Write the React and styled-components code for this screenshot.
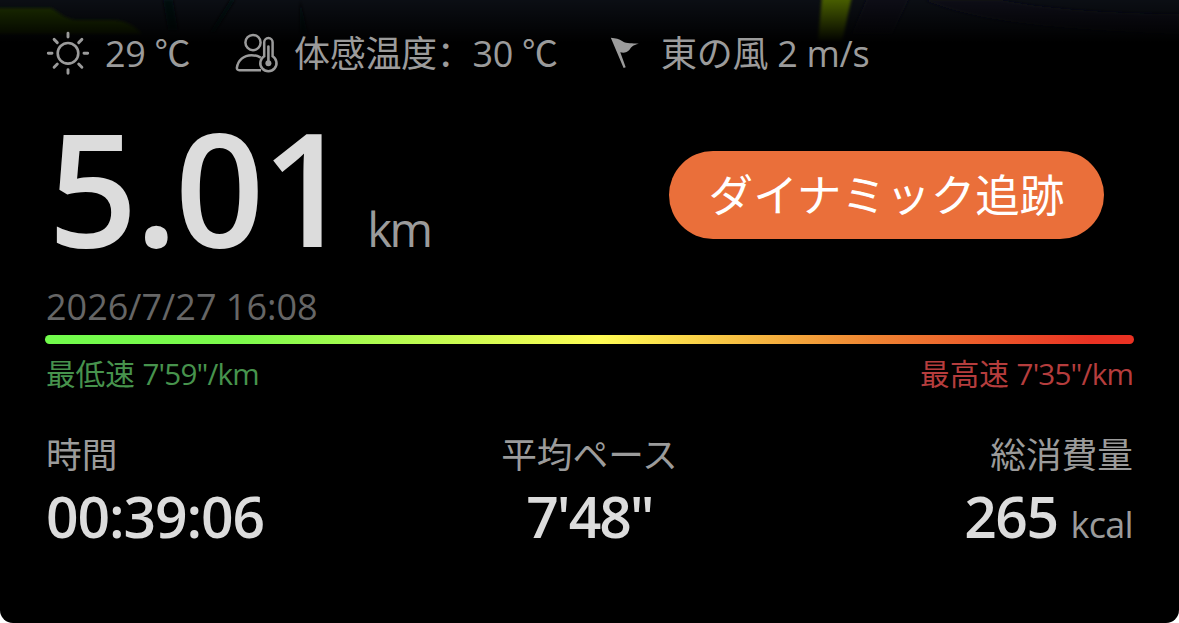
import styled, { createGlobalStyle } from 'styled-components';

const GlobalStyle = createGlobalStyle`
  * {
    box-sizing: border-box;
  }

  body {
    margin: 0;
    background: #fff;
    font-family: 'Open Sans', 'Noto Sans CJK JP', sans-serif;
  }
`;

const Card = styled.main`
  position: relative;
  width: 1179px;
  height: 623px;
  padding: 26px 46px 0 46px;
  background: #000;
  border-radius: 0 0 13px 13px;
  overflow: hidden;
  white-space: nowrap;
`;

const Backdrop = styled.svg`
  position: absolute;
  top: 0;
  left: 0;
`;

const Weather = styled.div`
  position: relative;
  display: flex;
  align-items: center;
  height: 54px;
  color: #9b9b9b;
`;

const WeatherItem = styled.div`
  display: flex;
  align-items: center;
  gap: ${(props) => props.$gap}px;
  width: ${(props) => props.$width}px;

  svg {
    flex: none;
  }
`;

const WeatherText = styled.span`
  padding-top: 1px;
  font-family: 'Open Sans', 'Noto Sans CJK SC', sans-serif;
  font-size: 36px;
  line-height: 54px;
  letter-spacing: -0.3px;
`;

const Hero = styled.section`
  display: flex;
  justify-content: space-between;
  align-items: flex-start;
  height: 203px;
  padding: 0 29px 0 2px;
`;

const Distance = styled.div`
  display: flex;
  align-items: baseline;
  gap: 19px;
  margin-top: 24px;
  line-height: 164px;
  color: #dcdcdc;
`;

const DistanceValue = styled.span`
  font-size: 157px;
  font-weight: 650;
  letter-spacing: -3px;
`;

const DistanceUnit = styled.span`
  font-size: 47px;
  letter-spacing: -2.5px;
  color: #9b9b9b;
`;

const TrackButton = styled.button`
  width: 435px;
  height: 88px;
  margin-top: 71px;
  padding: 0 0 5px;
  border: 0;
  border-radius: 44px;
  background: #ea6f3a;
  color: #fff;
  font-family: 'Noto Sans CJK JP', sans-serif;
  font-size: 44.6px;
  line-height: 80px;
`;

const DateLine = styled.time`
  display: block;
  height: 52px;
  font-size: 36px;
  line-height: 48px;
  color: #666;
`;

const PaceBar = styled.div`
  height: 9px;
  margin: 0 -1px;
  border-radius: 5px;
  background: linear-gradient(
    90deg,
    #71fb4c 0%,
    #7dfb4c 18%,
    #fffc54 51%,
    #ef8432 76%,
    #ea3223 96%
  );
`;

const PaceRange = styled.div`
  display: flex;
  justify-content: space-between;
  height: 88px;
`;

const Pace = styled.span`
  font-size: 29.6px;
  line-height: 60px;
  color: ${(props) => props.$color};
`;

const PaceValue = styled.span`
  letter-spacing: -0.8px;
`;

const Stats = styled.div`
  display: grid;
  grid-template-columns: 1fr 1fr 1fr;
`;

const Stat = styled.div`
  text-align: ${(props) => props.$align};
`;

const StatLabel = styled.div`
  font-size: 35.7px;
  line-height: 44px;
  color: #9b9b9b;
`;

const StatValue = styled.div`
  font-size: 57px;
  font-weight: 650;
  line-height: 80px;
  letter-spacing: ${(props) => props.$spacing}px;
  color: #dcdcdc;
`;

const StatUnit = styled.span`
  margin-left: 13px;
  font-size: 36px;
  font-weight: 400;
  letter-spacing: -0.7px;
  color: #9b9b9b;
`;

const SunIcon = () => (
  <svg width="44" height="44" viewBox="0 0 44 44" fill="none">
    <circle cx="22" cy="22.3" r="10.3" stroke="currentColor" strokeWidth="2.6" />
    <path
      d="M22 2.3v3.7M22 38.6v3.7M2.3 22.3H6M38 22.3h3.7M8.1 8.4l3.2 3.2M32.7 33l3.2 3.2M8.1 36.2l3.2-3.2M32.7 11.6l3.2-3.2"
      stroke="currentColor"
      strokeWidth="2.9"
      strokeLinecap="round"
    />
  </svg>
);

const FeelsLikeIcon = () => (
  <svg width="44" height="42" viewBox="0 0 44 42" fill="none">
    <g stroke="currentColor" strokeWidth="2.5">
      <circle cx="18" cy="10.6" r="7.6" />
      <path
        d="M26 38.2H4.2c-1.5 0-2.5-1-2.3-2.5C3 28.3 8.7 23.2 16.5 23.2c3.6 0 6.6.9 9.3 2.4"
        strokeLinejoin="round"
      />
      <path d="M29.2 24.2V10.3a4.2 4.2 0 0 1 8.4 0v13.9a8.1 8.1 0 1 1-8.4 0z" />
    </g>
    <path
      d="M33.4 14.5v16"
      stroke="currentColor"
      strokeWidth="2.6"
      strokeLinecap="round"
    />
    <circle cx="33.4" cy="31.3" r="3" fill="currentColor" />
  </svg>
);

const FlagIcon = () => (
  <svg width="30" height="32" viewBox="0 0 30 32">
    <path
      d="M.8.8C6 1.2 9 2 12.5 4.2c4.5 3 9.5 1.5 16.3 2.6-6.3 1.6-7.3 3.2-9.3 5.9-2.4 3-6 3.6-9.2 2.6L15.7 30.3l-2.1.7z"
      fill="currentColor"
    />
  </svg>
);

// Faded strip of the map that shows above the weather row
const MapEdge = () => (
  <Backdrop width="1179" height="50" viewBox="0 0 1179 50">
    <defs>
      <linearGradient id="fade" x1="0" y1="0" x2="0" y2="1">
        <stop offset="0" stopColor="#000" stopOpacity="0" />
        <stop offset="0.85" stopColor="#000" />
      </linearGradient>
      <filter id="soft">
        <feGaussianBlur stdDeviation="1.5" />
      </filter>
    </defs>
    <rect width="1179" height="50" fill="#0b0e14" />
    <g filter="url(#soft)">
      <path d="M-5 8h56c8 4 12 10 24 12h35c16 0 24 6 32 14H-5z" fill="#1f2d04" />
      <path d="M163 0h10l5 30h-10zM230 0h5l-20 32h-5zM300 0l8 34h-8z" fill="#06080c" />
      <path d="M822-4h30l-10 46h-24z" fill="#465c05" />
      <path d="M868-4h42l-18 38h-40z" fill="#0d1016" />
      <path d="M925 0c50 20 110 28 254 34V14C1100 14 1040 8 1000 0z" fill="#0e1016" />
    </g>
    <rect width="1179" height="50" fill="url(#fade)" />
  </Backdrop>
);

const App = () => {
  return (
    <>
      <GlobalStyle />
      <Card>
        <MapEdge />
        <Weather>
          <WeatherItem $gap={15} $width={189}>
            <SunIcon />
            <WeatherText>29 ℃</WeatherText>
          </WeatherItem>
          <WeatherItem $gap={15} $width={375}>
            <FeelsLikeIcon />
            <WeatherText lang="zh-CN">体感温度：30 ℃</WeatherText>
          </WeatherItem>
          <WeatherItem $gap={21}>
            <FlagIcon />
            <WeatherText lang="ja">東の風 2 m/s</WeatherText>
          </WeatherItem>
        </Weather>
        <Hero>
          <Distance>
            <DistanceValue>5.01</DistanceValue>
            <DistanceUnit>km</DistanceUnit>
          </Distance>
          <TrackButton>ダイナミック追跡</TrackButton>
        </Hero>
        <DateLine>2026/7/27 16:08</DateLine>
        <PaceBar />
        <PaceRange>
          <Pace $color="#47934d">
            最低速 <PaceValue>7'59"/km</PaceValue>
          </Pace>
          <Pace $color="#b53d3d">
            最高速 <PaceValue>7'35"/km</PaceValue>
          </Pace>
        </PaceRange>
        <Stats>
          <Stat $align="left">
            <StatLabel>時間</StatLabel>
            <StatValue $spacing={-1.1}>00:39:06</StatValue>
          </Stat>
          <Stat $align="center">
            <StatLabel>平均ペース</StatLabel>
            <StatValue $spacing={-2}>7'48"</StatValue>
          </Stat>
          <Stat $align="right">
            <StatLabel>総消費量</StatLabel>
            <StatValue $spacing={-1.5}>
              265<StatUnit>kcal</StatUnit>
            </StatValue>
          </Stat>
        </Stats>
      </Card>
    </>
  );
};

export default App;
